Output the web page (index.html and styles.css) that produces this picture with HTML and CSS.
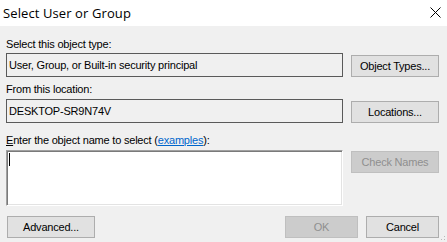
FILE: index.html
```html
<!DOCTYPE html>
<html>
<head>
    <title>Select User or Group</title>
    <link rel="stylesheet" href="styles.css">
</head>
<body>
    <div class="window">
        <div class="titlebar">
            <span class="title">Select User or Group</span>
            <svg class="close" width="11" height="11" viewBox="0 0 11 11">
                <path d="M0.5 0.5 L10.5 10.5 M10.5 0.5 L0.5 10.5" stroke="#000" stroke-width="1" fill="none"/>
            </svg>
        </div>
        <div class="content">
            <div class="label label-first">Select this object type:</div>
            <div class="row row-bottom">
                <div class="field">User, Group, or Built-in security principal</div>
                <button class="button side">Object Types...</button>
            </div>
            <div class="label">From this location:</div>
            <div class="row row-bottom">
                <div class="field">DESKTOP-SR9N74V</div>
                <button class="button side">Locations...</button>
            </div>
            <div class="label label-enter"><u>E</u>nter the object name to select (<a href="#" class="link">examples</a>):</div>
            <div class="row row-top">
                <div class="textbox"><span class="caret"></span></div>
                <button class="button side check" disabled>Check Names</button>
            </div>
            <div class="footer-row">
                <button class="button advanced">Advanced...</button>
                <div class="footer-right">
                    <button class="button small" disabled>OK</button>
                    <button class="button small cancel">Cancel</button>
                </div>
            </div>
        </div>
        <svg class="grip" width="5" height="5" viewBox="0 0 5 5">
            <rect x="3" y="0" width="1" height="1" fill="#b8b8b8"/>
            <rect x="3" y="3" width="1" height="1" fill="#b8b8b8"/>
            <rect x="0" y="3" width="1" height="1" fill="#b8b8b8"/>
        </svg>
    </div>
</body>
</html>
```

FILE: styles.css
```css
body {
    margin: 0;
    font-family: 'Liberation Sans', Arial, sans-serif;
    font-size: 11px;
    color: #000;
}
.window {
    position: relative;
    width: 447px;
    height: 242px;
    background-color: #f0f0f0;
    overflow: hidden;
}
.titlebar {
    height: 26px;
    background-color: #fff;
    display: flex;
    align-items: center;
    justify-content: space-between;
    padding: 0 6px 0 3px;
}
.title {
    font-family: 'Open Sans', 'Liberation Sans', sans-serif;
    font-size: 13px;
    letter-spacing: 0.1px;
    margin-top: -1px;
}
.close {
    display: block;
    margin-top: -1px;
}
.content {
    padding: 0 8px 0 6px;
}
.label {
    height: 14px;
    line-height: 14px;
    margin-top: 5px;
    margin-bottom: 3px;
    letter-spacing: -0.2px;
}
.label-first {
    margin-top: 11px;
    margin-bottom: 2px;
}
.label-enter {
    margin-top: 10px;
}
.label u {
    text-decoration: underline;
}
.link {
    color: #0066cc;
    text-decoration: underline;
}
.row {
    display: flex;
    gap: 8px;
}
.row-bottom {
    align-items: flex-end;
}
.row-top {
    align-items: flex-start;
}
.field {
    box-sizing: border-box;
    width: 337px;
    height: 24px;
    border: 1px solid #5a5a5a;
    background-color: #f0f0f0;
    padding: 0 0 0 2px;
    line-height: 22px;
    letter-spacing: -0.2px;
}
.textbox {
    box-sizing: border-box;
    width: 337px;
    height: 56px;
    background-color: #fff;
    border-top: 1px solid #a0a0a0;
    border-left: 1px solid #a0a0a0;
    border-right: 1px solid #fff;
    border-bottom: 1px solid #fff;
    box-shadow: inset 1px 1px 0 #7a7a7a, inset -1px -1px 0 #e3e3e3;
    padding: 2px 0 0 2px;
}
.caret {
    display: block;
    width: 1px;
    height: 13px;
    background-color: #000;
}
.button {
    box-sizing: border-box;
    height: 22px;
    border: 1px solid #adadad;
    background-color: #e1e1e1;
    font-family: 'Liberation Sans', Arial, sans-serif;
    font-size: 11px;
    color: #000;
    padding: 0;
    letter-spacing: -0.2px;
}
.button:disabled {
    background-color: #cccccc;
    border-color: #bfbfbf;
    color: #8f8f8f;
}
.side {
    width: 88px;
}
.check {
    margin-top: 1px;
}
.footer-row {
    display: flex;
    justify-content: space-between;
    margin-top: 10px;
}
.advanced {
    width: 88px;
    margin-left: 1px;
}
.footer-right {
    display: flex;
    gap: 8px;
}
.small {
    width: 73px;
}
.cancel {
    border-color: #adadad;
}
.grip {
    position: absolute;
    right: 1px;
    bottom: 1px;
}
```
